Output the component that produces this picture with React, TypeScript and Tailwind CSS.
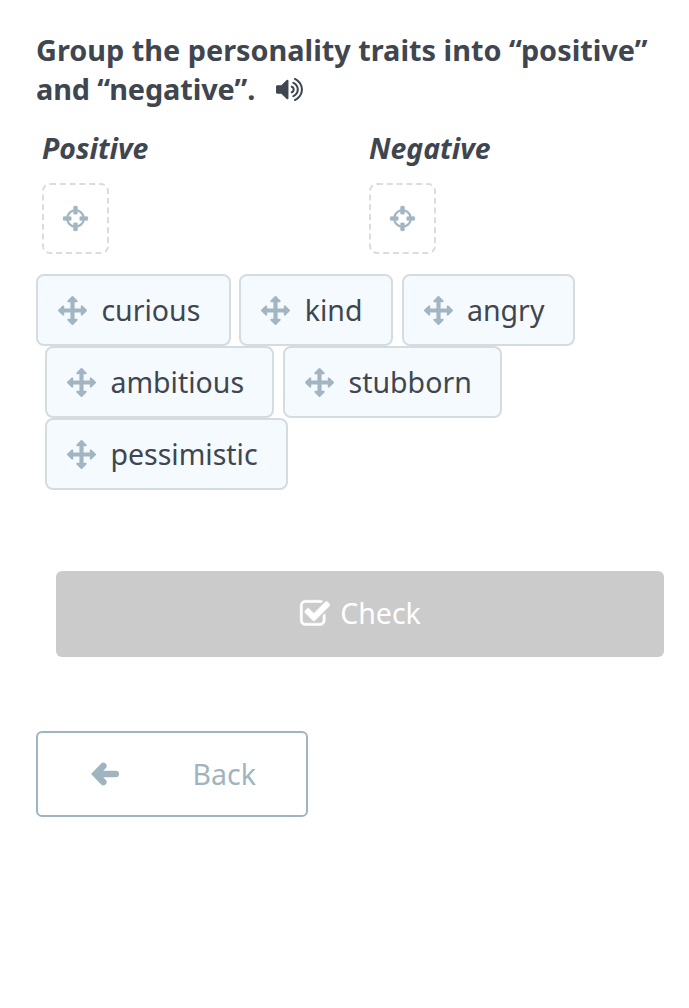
import { useState } from 'react'

const ICONS = {
  arrows:
    'M1792 896q0 26-19 45l-256 256q-19 19-45 19t-45-19-19-45v-128h-384v384h128q26 0 45 19t19 45-19 45l-256 256q-19 19-45 19t-45-19l-256-256q-19-19-19-45t19-45 45-19h128v-384h-384v128q0 26-19 45t-45 19-45-19l-256-256q-19-19-19-45t19-45l256-256q19-19 45-19t45 19 19 45v128h384v-384h-128q-26 0-45-19t-19-45 19-45l256-256q19-19 45-19t45 19l256 256q19 19 19 45t-19 45-45 19h-128v384h384v-128q0-26 19-45t45-19 45 19l256 256q19 19 19 45z',
  crosshairs:
    'M1325 1024h-109q-26 0-45-19t-19-45v-128q0-26 19-45t45-19h109q-32-108-112.5-188.5t-188.5-112.5v109q0 26-19 45t-45 19h-128q-26 0-45-19t-19-45v-109q-108 32-188.5 112.5t-112.5 188.5h109q26 0 45 19t19 45v128q0 26-19 45t-45 19h-109q32 108 112.5 188.5t188.5 112.5v-109q0-26 19-45t45-19h128q26 0 45 19t19 45v109q108-32 188.5-112.5t112.5-188.5zm339-192v128q0 26-19 45t-45 19h-143q-37 161-154.5 278.5t-278.5 154.5v143q0 26-19 45t-45 19h-128q-26 0-45-19t-19-45v-143q-161-37-278.5-154.5t-154.5-278.5h-143q-26 0-45-19t-19-45v-128q0-26 19-45t45-19h143q37-161 154.5-278.5t278.5-154.5v-143q0-26 19-45t45-19h128q26 0 45 19t19 45v143q161 37 278.5 154.5t154.5 278.5h143q26 0 45 19t19 45z',
  volume:
    'M832 352v1088q0 26-19 45t-45 19-45-19l-333-333h-262q-26 0-45-19t-19-45v-384q0-26 19-45t45-19h262l333-333q19-19 45-19t45 19 19 45zm384 544q0 76-42.5 141.5t-112.5 93.5q-10 5-25 5-26 0-45-18.5t-19-45.5q0-21 12-35.5t29-25 34-23 29-36 12-56.5-12-56.5-29-36-34-23-29-25-12-35.5q0-27 19-45.5t45-18.5q15 0 25 5 70 27 112.5 93t42.5 142zm256 0q0 153-85 282.5t-225 188.5q-13 5-25 5-27 0-46-19t-19-45q0-39 39-59 56-29 76-44 74-54 115.5-135.5t41.5-173.5-41.5-173.5-115.5-135.5q-20-15-76-44-39-20-39-59 0-26 19-45t45-19q13 0 26 5 140 59 225 188.5t85 282.5zm256 0q0 230-127 422.5t-338 283.5q-13 5-26 5-26 0-45-19t-19-45q0-36 39-59 7-4 22.5-10.5t22.5-10.5q46-25 82-51 123-91 192-227t69-289-69-289-192-227q-36-26-82-51-7-4-22.5-10.5t-22.5-10.5q-39-23-39-59 0-26 19-45t45-19q13 0 26 5 211 91 338 283.5t127 422.5z',
  check:
    'M1472 930v318q0 119-84.5 203.5t-203.5 84.5h-832q-119 0-203.5-84.5t-84.5-203.5v-832q0-119 84.5-203.5t203.5-84.5h832q63 0 117 25 15 7 18 23 3 17-9 29l-49 49q-10 10-23 10-3 0-9-2-23-6-45-6h-832q-66 0-113 47t-47 113v832q0 66 47 113t113 47h832q66 0 113-47t47-113v-254q0-13 9-22l64-64q10-10 23-10 6 0 12 3 20 8 20 29zm231-489l-814 814q-24 24-57 24t-57-24l-430-430q-24-24-24-57t24-57l110-110q24-24 57-24t57 24l263 263 647-647q24-24 57-24t57 24l110 110q24 24 24 57t-24 57z',
}

function Icon({ name, className }: { name: keyof typeof ICONS; className: string }) {
  return (
    <svg viewBox="0 0 1792 1792" fill="currentColor" aria-hidden="true" className={className}>
      <path d={ICONS[name]} />
    </svg>
  )
}

function BackArrow() {
  return (
    <svg
      viewBox="0 0 28 24"
      fill="none"
      stroke="currentColor"
      strokeWidth="6.6"
      strokeLinecap="round"
      aria-hidden="true"
      className="h-6 w-7"
    >
      <path d="M12.3 4L4.6 12l7.7 8M8 12h16.8" />
    </svg>
  )
}

const groups = ['Positive', 'Negative']

const rows = [
  { indent: '', words: ['curious', 'kind', 'angry'] },
  { indent: 'pl-[9px]', words: ['ambitious', 'stubborn'] },
  { indent: 'pl-[9px]', words: ['pessimistic'] },
]

export default function App() {
  const [selected, setSelected] = useState<string | null>(null)

  return (
    <main className="min-h-screen bg-white pl-9 pr-[25px] pt-[30px] font-['Noto_Sans',sans-serif] text-[28.5px] text-[#3f464f]">
      <h1 className="text-[28.85px] font-bold leading-[39px]">
        Group the personality traits into “positive”
        <br />
        <span className="tracking-[-0.1px]">and “negative”.</span>
        <button className="ml-5 inline-block align-[-4px]">
          <Icon name="volume" className="size-[29px]" />
        </button>
      </h1>

      <div className="mt-[21px] grid grid-cols-[327px_1fr] pl-1.5">
        {groups.map((group) => (
          <section key={group}>
            <h2 className="text-[28.4px] font-bold italic leading-[39px]">{group}</h2>
            <div className="mt-[15px] flex h-[71px] w-[67px] items-center justify-center rounded-lg border-2 border-dashed border-[#d9dde3]">
              <Icon name="crosshairs" className="size-[29px] stroke-current stroke-[16] text-[#a2b5c2]" />
            </div>
          </section>
        ))}
      </div>

      <div className="mt-5">
        {rows.map((row) => (
          <div key={row.words[0]} className={`flex gap-[8.7px] ${row.indent}`}>
            {row.words.map((word) => (
              <button
                key={word}
                onClick={() => setSelected(word === selected ? null : word)}
                className="flex h-[72px] items-center gap-[14.4px] rounded-lg border-2 border-[#d5dce1] bg-[#f5faff] pl-5 pr-[28.4px]"
              >
                <Icon name="arrows" className="size-[29px] text-[#a2b5c2]" />
                <span>{word}</span>
              </button>
            ))}
          </div>
        ))}
      </div>

      <button className="ml-5 mt-[81px] flex h-[86px] w-[608px] items-center justify-center gap-[9px] rounded-md bg-[#cbcbcb] pb-0.5 text-white">
        <Icon name="check" className="mt-px size-[32px] stroke-current stroke-[30]" />
        Check
      </button>

      <button className="mt-[74px] flex h-[86px] w-[272px] items-center rounded-md border-2 border-[#a0b4c0] pl-[52.5px] text-[#a0b4c0]">
        <BackArrow />
        <span className="ml-[74px]">Back</span>
      </button>
    </main>
  )
}
